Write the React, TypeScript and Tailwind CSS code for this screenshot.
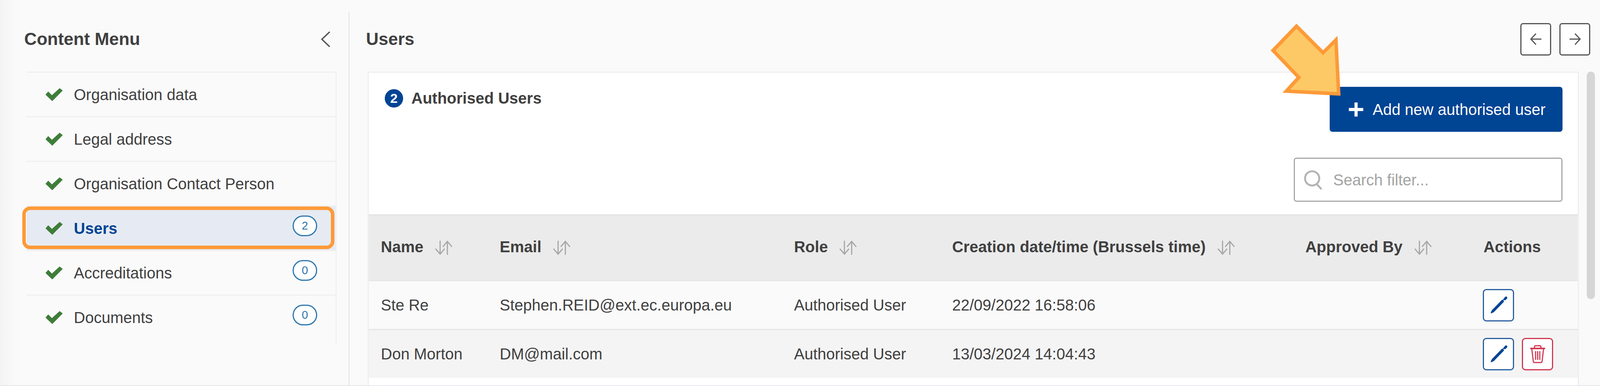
import React from "react";

const menu = [
  { label: "Organisation data" },
  { label: "Legal address" },
  { label: "Organisation Contact Person" },
  { label: "Users", count: 2, active: true },
  { label: "Accreditations", count: 0 },
  { label: "Documents", count: 0 },
];

const columns = [
  { label: "Name", sort: true },
  { label: "Email", sort: true },
  { label: "Role", sort: true },
  { label: "Creation date/time (Brussels time)", sort: true },
  { label: "Approved By", sort: true },
  { label: "Actions", sort: false },
];

const rows = [
  { name: "Ste Re", email: "Stephen.REID@ext.ec.europa.eu", role: "Authorised User", date: "22/09/2022 16:58:06", del: false, bg: "bg-[#fafafa]" },
  { name: "Don Morton", email: "DM@mail.com", role: "Authorised User", date: "13/03/2024 14:04:43", del: true, bg: "bg-[#f4f4f4]" },
];

const gridCols = "grid grid-cols-[315fr_780fr_419fr_936fr_467fr_287fr]";

function Check() {
  return (
    <svg width="45" height="34" viewBox="-1 -1 48 36" preserveAspectRatio="none" className="shrink-0">
      <polygon points="0,17 7,9 17,19 38,0 46,6 18,34" fill="#3f7d3a" stroke="#3f7d3a" strokeWidth="1" strokeLinejoin="round" />
    </svg>
  );
}

function SortIcon() {
  return (
    <svg width="45" height="37" viewBox="0 0 46 37" fill="none" stroke="#a6a6a6" strokeWidth="3" className="mt-[6px] shrink-0">
      <path d="M14 0 V34 M2 21 L14 35 L26 21" />
      <path d="M33 37 V2 M21 16 L33 2 L45 16" />
    </svg>
  );
}

function EditButton() {
  return (
    <button className="flex h-[83px] w-[80px] items-center justify-center rounded-[9px] border-[3px] border-[#2a5fa0] bg-white">
      <svg width="74" height="77" viewBox="0 0 76 77" preserveAspectRatio="none">
        <path d="M17.5 59.5 Q18 55 21 51 L48 24 L53 29 L26 56 Q22 59 17.5 59.5 Z" fill="#004494" />
        <path d="M50 26 L54 22" fill="none" stroke="#004494" strokeWidth="2.5" />
        <path d="M55 22.5 L58 19.5" fill="none" stroke="#004494" strokeWidth="6.5" strokeLinecap="round" />
      </svg>
    </button>
  );
}

function TrashButton() {
  return (
    <button className="flex h-[83px] w-[80px] items-center justify-center rounded-[9px] border-[3px] border-[#d1394f] bg-white">
      <svg width="74" height="77" viewBox="0 0 76 77" preserveAspectRatio="none" fill="none" stroke="#d1394f" strokeWidth="3">
        <path d="M19 24 H58" strokeWidth="4" />
        <path d="M30 23 V20 Q30 17 33 17 H44 Q47 17 47 20 V23" />
        <path d="M23 25 L27 57 Q27.5 60 30 60 H47 Q49.5 60 50 57 L54 25" />
        <path d="M33 31 V53 M38.5 31 V53 M44 31 V53" />
      </svg>
    </button>
  );
}

function NavButton({ dir }: { dir: "left" | "right" }) {
  return (
    <button className="flex h-[83px] w-[79px] items-center justify-center rounded-[7px] border-[3px] border-[#555555] bg-white">
      <svg width="30" height="30" viewBox="0 0 30 30" fill="none" stroke="#555555" strokeWidth="3">
        {dir === "left" ? <path d="M29 15 H2 M15 1 L2 15 L15 29" /> : <path d="M1 15 H28 M15 1 L28 15 L15 29" />}
      </svg>
    </button>
  );
}

export default function App() {
  return (
    <div className="relative box-border flex h-[987px] w-full overflow-hidden border-b-2 border-[#e4e8ec] bg-[#fafafa] font-['Liberation_Sans',Arial,sans-serif] text-[40px] text-[#404040]">
      <div className="h-full w-[39px] shrink-0 bg-linear-to-r from-[#f3f3f3] to-[#fafafa]" />

      <aside className="mt-[30px] flex w-[856px] shrink-0 flex-col border-r-[3px] border-[#e8e8e8] pl-[23px]">
        <div className="flex h-[140px] shrink-0 items-center justify-between pr-[46px]">
          <h2 className="text-[44.5px] font-bold leading-none text-[#404040]">Content Menu</h2>
          <svg width="25" height="41" viewBox="0 0 25 41" fill="none" stroke="#555555" strokeWidth="3.5">
            <path d="M23 1.5 L3 20.5 L23 39.5" />
          </svg>
        </div>
        <ul className="ml-[6px] mt-[13px] flex h-[700px] w-[794px] flex-col border-r-[3px] border-[#f1f1f1] pb-[16px]">
          {menu.map((item) => (
            <li
              key={item.label}
              className={`relative box-border flex h-[114px] shrink-0 items-center border-t-[3px] border-[#f0f0f0] pl-[48px] pr-[47px] ${item.active ? "bg-[#e6ebf3]" : ""}`}
            >
              {item.active && (
                <span className="absolute -left-[11px] bottom-[2px] right-[3px] top-[0px] rounded-[20px] border-[9px] border-[#fd9a38]" />
              )}
              <Check />
              <span className={`ml-[28px] flex-1 ${item.active ? "font-bold text-[#004494]" : ""}`}>{item.label}</span>
              {item.count !== undefined && (
                <span className="mb-[12px] flex h-[53px] w-[63px] items-center justify-center rounded-full border-[3px] border-[#2e78ae] bg-white text-[29px] text-[#2e73a8]">
                  {item.count}
                </span>
              )}
            </li>
          ))}
        </ul>
      </aside>

      <main className="flex min-w-0 flex-1 flex-col">
        <div className="flex h-[183px] shrink-0 items-center justify-between pl-[42px] pr-[25px] pt-[17px]">
          <h1 className="text-[44.5px] font-bold leading-none text-[#404040]">Users</h1>
          <div className="flex gap-[21px]">
            <NavButton dir="left" />
            <NavButton dir="right" />
          </div>
        </div>

        <div className="flex flex-1 pl-[46px] pr-[13px]">
          <section className="box-border h-[802px] min-w-0 flex-1 border-l-[3px] border-r-[3px] border-t-[3px] border-[#efefef] bg-white">
            <div className="h-[362px] pl-[41px] pr-[39px] pt-[36px]">
              <div className="flex items-start justify-between">
                <div className="flex h-[58px] items-center gap-[21px]">
                  <span className="flex h-[47px] w-[47px] items-center justify-center rounded-full bg-[#004494] text-[34px] font-bold leading-none text-white">
                    2
                  </span>
                  <span className="font-bold">Authorised Users</span>
                </div>
                <button className="flex h-[115px] w-[596px] items-center rounded-[7px] bg-[#004494] pl-[48px] text-white">
                  <svg width="39" height="36" viewBox="0 0 39 36" className="shrink-0" fill="none" stroke="#ffffff" strokeWidth="8">
                    <path d="M1 18 H38 M19.5 0 V36" />
                  </svg>
                  <span className="ml-[23px]">Add new authorised user</span>
                </button>
              </div>
              <div className="ml-auto mt-[66px] box-border flex h-[113px] w-[688px] items-center rounded-[7px] border-[3px] border-[#a8a8a8] bg-white pl-[23px] text-[#a3a3a3]">
                <svg width="48" height="50" viewBox="0 0 50 52" fill="none" stroke="#b3b3b3" strokeWidth="5" className="shrink-0">
                  <circle cx="22" cy="22" r="19" />
                  <path d="M34 37 L47 51" />
                </svg>
                <span className="ml-[27px]">Search filter...</span>
              </div>
            </div>

            <div className={`${gridCols} box-border h-[168px] items-center border-t-[3px] border-[#e3e3e3] bg-[#ebebeb] pb-[6px]`}>
              {columns.map((c) => (
                <div key={c.label} className={`flex items-center gap-[29px] font-bold ${c.sort ? "pl-[31px]" : "pl-[36px]"}`}>
                  <span className="whitespace-nowrap">{c.label}</span>
                  {c.sort && <SortIcon />}
                </div>
              ))}
            </div>

            {rows.map((r) => (
              <div key={r.name} className={`${gridCols} box-border h-[125px] items-center border-t-[3px] border-[#e6e6e6] ${r.bg}`}>
                <div className="pl-[31px]">{r.name}</div>
                <div className="pl-[31px]">{r.email}</div>
                <div className="pl-[31px]">{r.role}</div>
                <div className="pl-[31px]">{r.date}</div>
                <div />
                <div className="flex gap-[20px] pl-[34px]">
                  <EditButton />
                  {r.del && <TrashButton />}
                </div>
              </div>
            ))}
          </section>

          <div className="ml-[20px] h-[582px] w-[21px] shrink-0 rounded-full bg-[#d6d6d6]" />
        </div>
      </main>

      <svg
        className="absolute right-[651px] top-[50px]"
        width="200"
        height="210"
        viewBox="3245 50 200 210"
        fill="#fdc966"
        stroke="#fd9a38"
        strokeWidth="9"
        strokeLinejoin="miter"
        strokeMiterlimit="10"
      >
        <polygon points="3319,67 3387,135 3420,102 3427,240 3293,233 3325,198 3259,129" />
      </svg>
    </div>
  );
}
